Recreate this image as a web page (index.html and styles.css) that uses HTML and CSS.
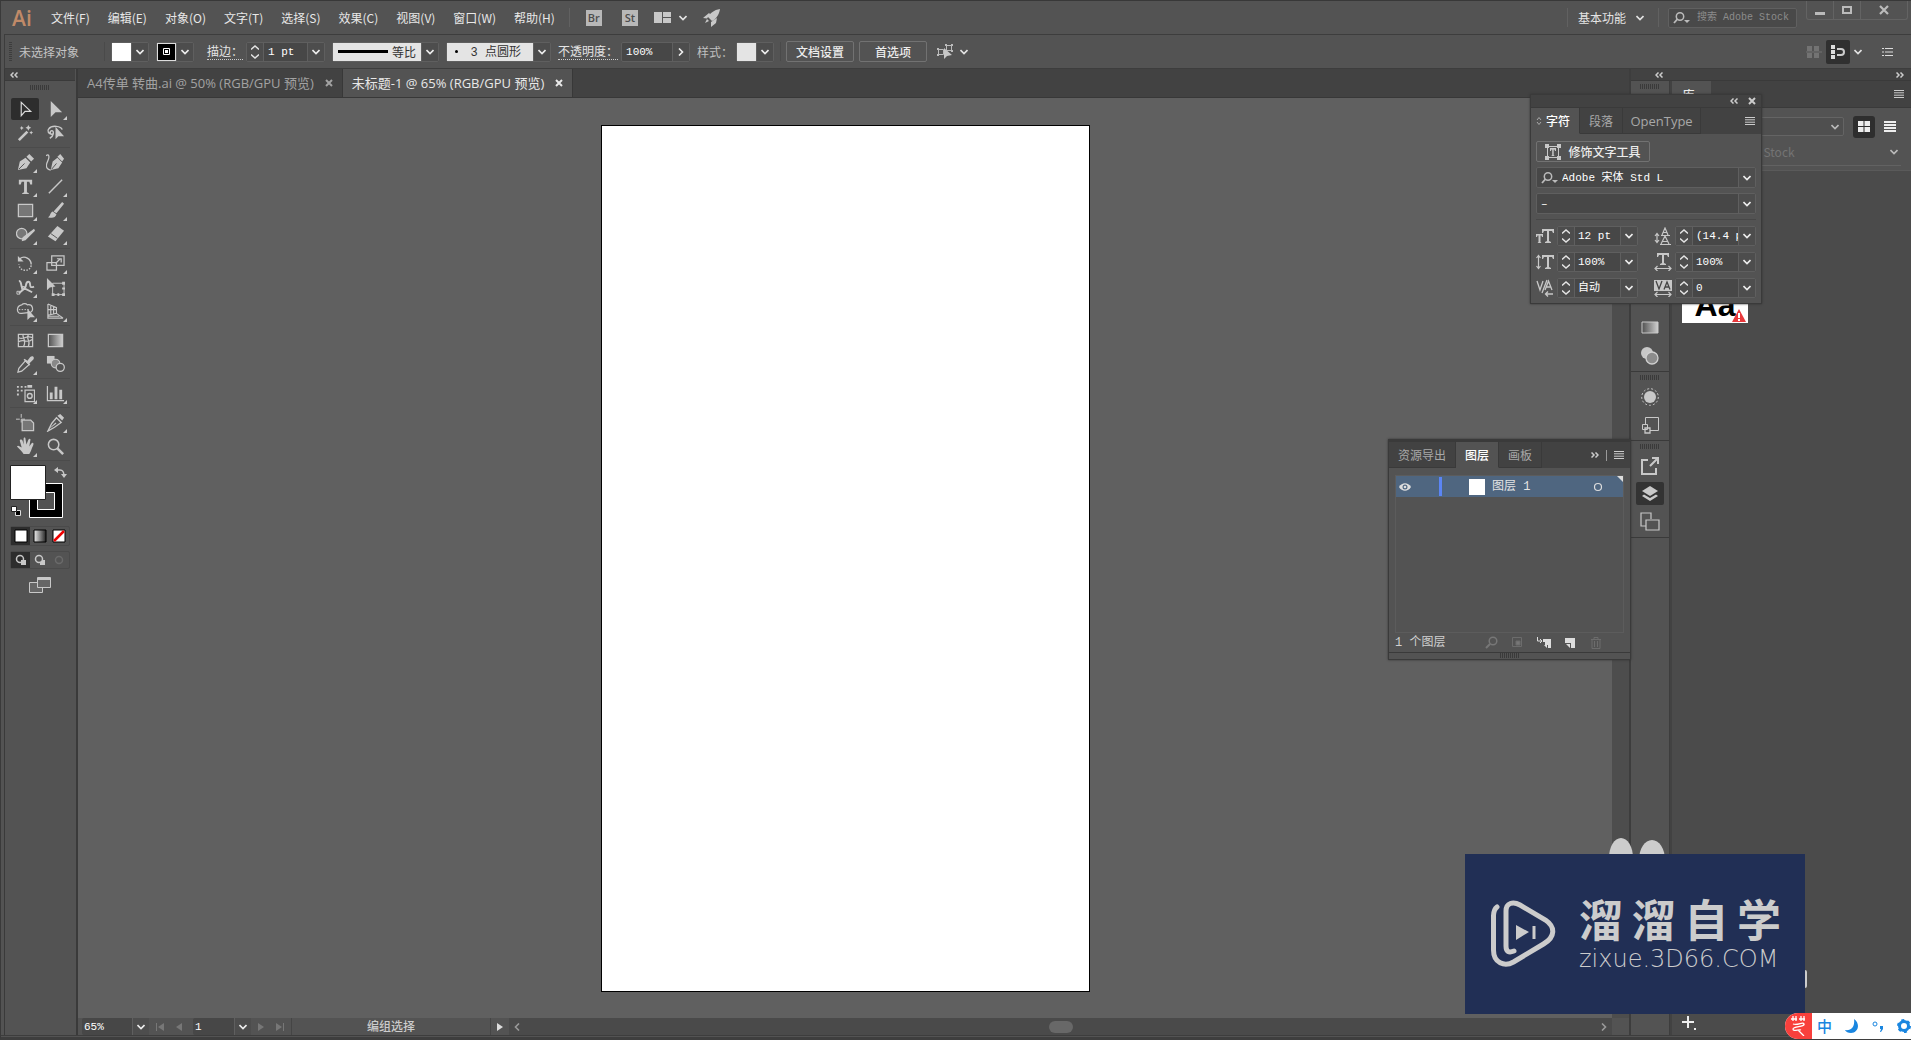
FILE: index.html
```html
<!DOCTYPE html>
<html lang="zh-CN">
<head>
<meta charset="utf-8">
<title>Ai</title>
<link rel="stylesheet" href="styles.css">
</head>
<body>
<svg class="defs" width="0" height="0" aria-hidden="true">
  <defs>
    <linearGradient id="grad"><stop offset="0" stop-color="#505050"/><stop offset="1" stop-color="#cfcfcf"/></linearGradient>
    <linearGradient id="grad2"><stop offset="0" stop-color="#eee"/><stop offset="1" stop-color="#222"/></linearGradient>
    <symbol id="chev" viewBox="0 0 8 6"><path d="M0.500 1l3.500 3.500L7.500 1" fill="none" stroke="currentColor" stroke-width="1.600"/></symbol>
    <symbol id="spin" viewBox="0 0 8 16"><path d="M0 5.500l4-3.500 4 3.500M0 10.500l4 3.500 4-3.500" fill="none" stroke="currentColor" stroke-width="1.500"/></symbol>
    <symbol id="dbl" viewBox="0 0 8 6"><path d="M3.500 .5L1 3l2.500 2.500M7.500 .5L5 3l2.500 2.500" fill="none" stroke="currentColor" stroke-width="1.500"/></symbol>
    <symbol id="cross" viewBox="0 0 8 8"><path d="M1 1l6 6M7 1L1 7" fill="none" stroke="currentColor" stroke-width="2"/></symbol>
    <symbol id="lines" viewBox="0 0 10 8"><path d="M0 .5h10M0 2.800h10M0 5.200h10M0 7.500h10" stroke="currentColor" stroke-width="1"/></symbol>
    <symbol id="find" viewBox="0 0 17 12"><circle cx="7" cy="4.500" r="3.700" fill="none" stroke="currentColor" stroke-width="1.500"/><path d="M4.500 7L1 11" stroke="currentColor" stroke-width="1.800"/><path d="M11 8h6l-3 3z" fill="currentColor"/></symbol>
  </defs>
</svg>

<div class="app">
  <header class="menubar">
    <span class="logo">Ai</span>
    <nav class="menus">
      <a href="#">文件(F)</a><a href="#">编辑(E)</a><a href="#">对象(O)</a><a href="#">文字(T)</a><a href="#">选择(S)</a><a href="#">效果(C)</a><a href="#">视图(V)</a><a href="#">窗口(W)</a><a href="#">帮助(H)</a>
    </nav>
    <i class="vsep"></i>
    <div class="apps">
      <button class="badge">Br</button>
      <button class="badge">St</button>
      <button class="plain" aria-label="Arrange"><svg width="17" height="11" viewBox="0 0 17 11"><path d="M0 0h8v11H0zM9 0h8v5H9zM9 6h8v5H9z" fill="#c8c8c8"/></svg><svg width="8" height="6"><use href="#chev"/></svg></button>
      <button class="plain" aria-label="GPU"><svg width="18" height="18" viewBox="0 0 18 18" fill="#c8c8c8"><path d="M17 0C11 1 7 4 5 8l4 4C13 10 16 6 17 0zM6 4L0 9l4 .5L7 5zM8 13v5l5-4 1-5zM4 10l-2 4 4-2z"/></svg></button>
    </div>
    <div class="menu-right">
      <i class="vsep"></i>
      <button class="plain workspace">基本功能<svg width="8" height="6"><use href="#chev"/></svg></button>
      <i class="vsep"></i>
      <label class="stock"><svg width="17" height="12"><use href="#find"/></svg><input type="text" placeholder="搜索 Adobe Stock" aria-label="搜索 Adobe Stock"></label>
      <div class="winbtns">
        <button aria-label="Minimize"><svg width="10" height="10"><path d="M0 7h10v3H0z" fill="#bbb"/></svg></button>
        <button aria-label="Maximize"><svg width="10" height="10"><path d="M1 2h8v6H1z" fill="none" stroke="#bbb" stroke-width="2"/></svg></button>
        <button class="close" aria-label="Close"><svg width="10" height="10"><path d="M1 1l8 8M9 1L1 9" stroke="#bbb" stroke-width="2.200"/></svg></button>
      </div>
    </div>
  </header>

  <section class="control">
    <i class="grip-v"></i>
    <span class="nosel">未选择对象</span>
    <i class="vsep"></i>
    <div class="combo"><span class="sw white"></span><button class="drop" aria-label="Fill"><svg width="8" height="6"><use href="#chev"/></svg></button></div>
    <div class="combo"><span class="sw black"><svg width="19" height="18"><path d="M6.500 5.500h6v6h-6z" fill="none" stroke="#fff"/><path d="M8 7h3v3H8z" fill="#fff"/></svg></span><button class="drop" aria-label="Stroke"><svg width="8" height="6"><use href="#chev"/></svg></button></div>
    <label class="dotted strokelab" for="sw">描边：</label>
    <div class="combo"><button class="spin" aria-label="Step"><svg width="8" height="16"><use href="#spin"/></svg></button><input id="sw" class="num" value="1 pt"><button class="drop" aria-label="Weight"><svg width="8" height="6"><use href="#chev"/></svg></button></div>
    <div class="combo"><span class="profile"><i></i>等比</span><button class="drop" aria-label="Profile"><svg width="8" height="6"><use href="#chev"/></svg></button></div>
    <div class="combo"><span class="profile brush"><b></b><span><span class="mono">3 </span>点圆形</span></span><button class="drop" aria-label="Brush"><svg width="8" height="6"><use href="#chev"/></svg></button></div>
    <label class="dotted" for="op">不透明度：</label>
    <div class="combo"><input id="op" class="num wide" value="100%"><button class="drop" aria-label="Opacity"><svg class="east" width="8" height="6"><use href="#chev"/></svg></button></div>
    <span class="stylelab">样式：</span>
    <div class="combo"><span class="sw light"></span><button class="drop" aria-label="Style"><svg width="8" height="6"><use href="#chev"/></svg></button></div>
    <i class="vsep tight"></i>
    <button class="outline">文档设置</button>
    <button class="outline">首选项</button>
    <button class="plain similar" aria-label="Select similar"><svg width="17" height="18" viewBox="0 0 17 18"><path d="M9.500 2.500h5v5h-5zM1.500 6.500h5v5h-5z" fill="none" stroke="#bbb"/><path d="M8 1h2v2H8zM14 1h2v2h-2zM14 7h2v2h-2zM0 5h2v2H0zM0 11h2v2H0z" fill="#bbb"/><path d="M7 5v11l3-3 5-1z" fill="#c8c8c8"/></svg><svg width="8" height="6"><use href="#chev"/></svg></button>
    <div class="ctl-right">
      <button class="plain" aria-label="Grid"><svg width="16" height="12" fill="#737373"><path d="M1 0h5v5H1zM8 0h5v5H8zM1 7h5v5H1zM8 7h5v5H8zM0 5.500h16v1H0z"/></svg></button>
      <button class="plain snap" aria-label="Snap"><svg width="14" height="14"><path d="M0 0h4v4H0zM0 5h4v4H0zM0 10h4v4H0z" fill="#ddd"/><path d="M6 4h4a2.500 2.500 0 0 1 0 6H6" fill="none" stroke="#ccc" stroke-width="2"/></svg></button>
      <button class="plain" aria-label="Snap options"><svg width="8" height="6"><use href="#chev"/></svg></button>
      <button class="plain last" aria-label="Menu"><svg width="11" height="8"><path d="M0 .5h2M3 .5h8M0 4h2M3 4h8M0 7.500h2M3 7.500h8" stroke="#ddd"/></svg></button>
    </div>
  </section>

  <main class="work">
    <aside class="tools">
      <div class="strip"><svg width="8" height="6"><use href="#dbl"/></svg></div>
      <i class="grip"></i>
      <div class="tgroup">
        <button class="on"><svg viewBox="0 0 20 20"><path d="M5.500 2.500v14l4-4.500h6z" fill="none" stroke="#ddd" stroke-width="1.200"/></svg></button>
        <button class="more"><svg viewBox="0 0 20 20"><path d="M5 1v17l5-5h7z"/></svg></button>
        <button><svg viewBox="0 0 20 20"><path d="M2 16l9-9 2 2-9 9zM13 1l1 2 2 1-2 1-1 2-1-2-2-1 2-1zM6 2l.7 1.500 1.500.7-1.500.7L6 6.500l-.7-1.600L4 4.200l1.300-.7zM16 7l.7 1.300L18 9l-1.300.7L16 11l-.7-1.300L14 9l1.300-.7z"/></svg></button>
        <button><svg viewBox="0 0 20 20"><path d="M8 11C2 11 1 7 3 5c3-4 13-3 14 1M7 11a2 2 0 1 1-1-4c3 0 2 6-2 8" fill="none" stroke="#c8c8c8" stroke-width="1.500"/><path d="M10 3v13l3-3h6z"/></svg></button>
      </div>
      <div class="tgroup">
        <button class="more"><svg viewBox="0 0 20 20"><path d="M2 18l2-9 6-4 5 5-4 6zM11 4l3-3 5 5-3 3z"/><path d="M3 17l6-6" stroke="#535353"/></svg></button>
        <button><svg viewBox="0 0 20 20"><path d="M5 18l2-9 5-4 5 5-4 6zM12 4l3-3 4 5-2 3z"/><path d="M6 17l5-6" stroke="#535353"/><path d="M0 3c3-3 4 1 2 5s-3 9 3 10" fill="none" stroke="#c8c8c8" stroke-width="1.300"/></svg></button>
        <button class="more"><svg viewBox="0 0 20 20"><path d="M3 3h14v5h-2l-1-3h-2.500v11l2 1v1h-7v-1l2-1V5H6L5 8H3z"/></svg></button>
        <button class="more"><svg viewBox="0 0 20 20"><path d="M3 17L17 3" stroke="#c8c8c8" stroke-width="1.500"/></svg></button>
        <button class="more"><svg viewBox="0 0 20 20"><path d="M2.500 3.500h15v13h-15z" fill="#777" stroke="#c8c8c8" stroke-width="1.300"/></svg></button>
        <button class="more"><svg viewBox="0 0 20 20"><path d="M17 1l2 2-8 10-3-2zM7 11l4 3c-1 4-5 4-9 3 3-1 2-5 5-6z"/></svg></button>
        <button class="more"><svg viewBox="0 0 20 20"><circle cx="6" cy="9" r="5.500" fill="#777" stroke="#c8c8c8" stroke-width="1.300"/><path d="M19 4l1 2-10 10-4 1 1-4z"/></svg></button>
        <button class="more"><svg viewBox="0 0 20 20"><path d="M12 1l7 5-9 11-8-5z"/><path d="M5 9l7 5" stroke="#535353"/></svg></button>
      </div>
      <div class="tgroup">
        <button class="more"><svg viewBox="0 0 20 20" fill="none" stroke="#c8c8c8" stroke-width="1.500"><path d="M4 5c5-4 12 0 12 6"/><path d="M16 12c-1 7-12 7-13-1" stroke-dasharray="1.500 1.500"/><path d="M2 2v6h6z" fill="#c8c8c8" stroke="none"/></svg></button>
        <button class="more"><svg viewBox="0 0 20 20" fill="none" stroke="#c8c8c8" stroke-width="1.300"><path d="M6 2h13v10H6zM1 9h10v8H1zM10 10l5-5M11.500 5H16v4"/></svg></button>
        <button class="more"><svg viewBox="0 0 20 20" fill="none" stroke="#c8c8c8" stroke-width="2"><path d="M3 3c4 0 1 8 5 8s1-7 5-7-1 8 6 5M3 16l6-5 8 4"/><path d="M1 14h3v3H1zM6 9h3v3H6z" stroke-width="1"/></svg></button>
        <button><svg viewBox="0 0 20 20"><path d="M7 5.500h12v12H7z" fill="none" stroke="#c8c8c8"/><path d="M1 0v13l3-3 6-1zM6 16h3v3H6zM12 16h2v3h-2zM17 16h3v3h-3zM17 4h3v3h-3zM17 10h3v2h-3z"/></svg></button>
        <button class="more"><svg viewBox="0 0 20 20"><path d="M6 3a4 4 0 0 1 6 0c6-1 7 6 3 8l-9 1C0 13 0 4 6 3z" fill="none" stroke="#c8c8c8" stroke-width="1.300"/><path d="M3 8h12" stroke="#c8c8c8" stroke-dasharray="1.500 1.500"/><path d="M12 7v12l3-3h5z"/></svg></button>
        <button class="more"><svg viewBox="0 0 20 20" fill="none" stroke="#c8c8c8" stroke-width="1.200"><path d="M2 2v15h16M2 2l9 4v6L2 14M2 8h9M5 3v10M8 5v8M11 12l7 5M2 15h12"/></svg></button>
      </div>
      <div class="tgroup">
        <button><svg viewBox="0 0 20 20" fill="none" stroke="#c8c8c8" stroke-width="1.300"><path d="M2.500 3.500h15v13h-15zM8 3c-3 3 4 6 0 13M2 12c5-5 9 2 15-3M13 4c-3 4 3 7 0 12M3 7c4 3 8-3 14 0"/></svg></button>
        <button><svg viewBox="0 0 20 20"><path d="M2.500 3.500h15v13h-15z" fill="url(#grad)" stroke="#c8c8c8" stroke-width="1.300"/></svg></button>
        <button class="more"><svg viewBox="0 0 20 20"><path d="M12 6l3-4c3-2 5 1 3 3l-4 4 1 1-1 1-6-6 1-1z"/><path d="M10 6l4 4-8 7-4 1 1-4z" fill="none" stroke="#c8c8c8" stroke-width="1.300"/></svg></button>
        <button><svg viewBox="0 0 20 20"><path d="M1 1h8v8H1z"/><circle cx="10" cy="9" r="4.500" fill="#888" stroke="#c8c8c8" stroke-width="1.200"/><circle cx="15" cy="13" r="4.300" fill="#535353" stroke="#c8c8c8" stroke-width="1.300"/></svg></button>
      </div>
      <div class="tgroup">
        <button class="more"><svg viewBox="0 0 20 20"><path d="M1 2h2v2H1zM5 2h2v2H5zM9 2h2v2H9zM1 6h2v2H1zM5 6h2v2H5zM1 10h2v2H1zM12 1h5v3h-5z"/><path d="M9.500 6.500h10v12h-10z" fill="none" stroke="#c8c8c8" stroke-width="1.300"/><circle cx="14.500" cy="12.500" r="2.500" fill="none" stroke="#c8c8c8" stroke-width="1.500"/></svg></button>
        <button class="more"><svg viewBox="0 0 20 20"><path d="M1.500 2v15.500H19" fill="none" stroke="#c8c8c8" stroke-width="1.300"/><path d="M4 9h3v7H4zM9 3h3v13H9zM14 6h3v10h-3z"/></svg></button>
      </div>
      <div class="tgroup">
        <button><svg viewBox="0 0 20 20"><path d="M6.500 7.500h9l3 3v8h-12z" fill="#777" stroke="#c8c8c8" stroke-width="1.300"/><path d="M0 6.500h10M5.500 1v9" stroke="#c8c8c8" stroke-dasharray="4 1.500"/></svg></button>
        <button class="more"><svg viewBox="0 0 20 20"><path d="M11 5l5 5-7 5-7 4 4-8z" fill="none" stroke="#c8c8c8" stroke-width="1.400"/><path d="M12 3l3-2 4 4-2 3zM2 18l8-8 1 1z"/></svg></button>
        <button class="more"><svg viewBox="0 0 20 20"><path d="M8 18c-2-3-4-5-7-8 1-2 3 0 5 1L4 4c0-2 2-2 3 0l1 4V2c0-2 2-2 2 0l1 6 2-5c1-2 3-1 2 1l-1 6 2-3c2-2 3 0 2 2-2 4-2 6-4 9z"/></svg></button>
        <button><svg viewBox="0 0 20 20" fill="none" stroke="#c8c8c8"><circle cx="8" cy="8" r="5.500" stroke-width="1.600"/><path d="M12 12l6 6" stroke-width="2.600"/></svg></button>
      </div>
      <div class="fillstroke">
        <svg width="60" height="58" viewBox="0 0 60 58"><path d="M19.500 18.500h33v34h-33z" fill="#000" stroke="#fff"/><path d="M27.500 27.500h17v17h-17z" fill="#535353" stroke="#fff"/><path d="M.5.5h35v34H.5z" fill="#fff" stroke="#222"/><path d="M47 5h3c3 0 4 2 4 6" fill="none" stroke="#c8c8c8" stroke-width="1.300"/><path d="M44 5l4-3v6zM51 9h6l-3 4z" fill="#c8c8c8"/><path d="M5.500 45.500h5v5h-5z" fill="#000" stroke="#ddd"/><path d="M1.500 41.500h5v5h-5z" fill="#fff" stroke="#222"/></svg>
      </div>
      <div class="modes">
        <button class="on"><svg width="14" height="14"><path d="M1 1h12v12H1z" fill="#fff" stroke="#000"/></svg></button>
        <button><svg width="14" height="14"><path d="M1 1h12v12H1z" fill="url(#grad2)" stroke="#000"/></svg></button>
        <button><svg width="14" height="14"><path d="M1 1h12v12H1z" fill="#fff" stroke="#000"/><path d="M2 12L12 2" stroke="#e00" stroke-width="2.500"/></svg></button>
      </div>
      <div class="modes second">
        <button class="on"><svg width="12" height="12"><circle cx="5" cy="5" r="3.500" fill="none" stroke="#c8c8c8" stroke-width="1.500"/><path d="M6 6h5v5H6z" fill="#c8c8c8"/></svg></button>
        <button><svg width="12" height="12"><path d="M6 6h5v5H6z" fill="#c8c8c8"/><circle cx="5" cy="5" r="3.500" fill="#535353" stroke="#c8c8c8" stroke-width="1.500"/></svg></button>
        <button><svg width="12" height="12"><circle cx="6" cy="6" r="3.500" fill="none" stroke="#6a6a6a" stroke-width="1.500"/></svg></button>
      </div>
      <button class="screenmode" aria-label="Screen mode"><svg width="22" height="16"><path d="M.5 5.500h13v10H.5z" fill="#666" stroke="#c8c8c8"/><path d="M8.500 .5h13v10h-13z" fill="#666" stroke="#c8c8c8"/><path d="M8 1h14v2H8z" fill="#c8c8c8"/></svg></button>
    </aside>

    <section class="doc">
      <div class="doctabs">
        <div class="doctab">A4传单 转曲.ai @ 50% (RGB/GPU 预览)<svg width="8" height="8"><use href="#cross"/></svg></div>
        <div class="doctab active">未标题-1 @ 65% (RGB/GPU 预览)<svg width="8" height="8"><use href="#cross"/></svg></div>
      </div>
      <div class="viewport">
        <div class="canvas"><div class="artboard"></div></div>
        <div class="vscroll"></div>
      </div>
      <footer class="status">
        <div class="combo flat"><input class="num wide" value="65%" aria-label="Zoom"><button class="drop" aria-label="Zoom list"><svg width="8" height="6"><use href="#chev"/></svg></button></div>
        <div class="nav"><svg width="8" height="8"><path d="M0 0h1v8H0zM8 0v8L2 4z"/></svg><svg width="6" height="8"><path d="M6 0v8L0 4z"/></svg></div>
        <div class="combo flat"><input class="num" value="1" aria-label="Artboard"><button class="drop" aria-label="Artboard list"><svg width="8" height="6"><use href="#chev"/></svg></button></div>
        <div class="nav"><svg width="6" height="8"><path d="M0 0v8l6-4z"/></svg><svg width="8" height="8"><path d="M7 0h1v8H7zM0 0v8l6-4z"/></svg></div>
        <div class="statustext">编组选择</div>
        <button class="play" aria-label="Status menu"><svg width="6" height="8"><path d="M0 0v8l6-4z" fill="#ddd"/></svg></button>
        <div class="hscroll"><svg class="west" width="8" height="6"><use href="#chev"/></svg><i></i><svg class="east" width="8" height="6"><use href="#chev"/></svg></div>
        <div class="corner"></div>
      </footer>
    </section>

    <aside class="right">
      <div class="strip both"><svg width="8" height="6"><use href="#dbl"/></svg><svg class="flip" width="8" height="6"><use href="#dbl"/></svg></div>
      <div class="columns">
        <div class="dock">
          <div class="dgroup first"><i class="grip"></i><i class="fill"></i>
            <button><svg width="18" height="14"><path d="M1 1h16v11H1z" fill="url(#grad)" stroke="#c8c8c8"/></svg></button>
            <button><svg width="20" height="20"><circle cx="7" cy="7" r="6" fill="#c8c8c8"/><circle cx="12" cy="12" r="6" fill="#8c8c8c" stroke="#d0d0d0" stroke-width="1.300"/></svg></button>
          </div>
          <div class="dgroup"><i class="grip"></i>
            <button><svg width="20" height="20"><circle cx="10" cy="10" r="6" fill="#c8c8c8"/><circle cx="10" cy="10" r="8.300" fill="none" stroke="#c8c8c8" stroke-dasharray="2 2"/></svg></button>
            <button><svg width="18" height="18" fill="none" stroke="#c8c8c8"><path d="M4.500 8V1.500h13v13H9M1.500 8.500h5v5h-5z"/><path d="M4 12h5v5H4z" stroke-width="1.300"/></svg></button>
          </div>
          <div class="dgroup"><i class="grip"></i>
            <button><svg width="20" height="20" fill="none" stroke="#c8c8c8" stroke-width="2"><path d="M8 4H2v14h14v-6M10 10l7-7M12 2h6v6"/></svg></button>
            <button class="on"><svg width="18" height="18" fill="#c8c8c8"><path d="M9 1l8 5-8 5-8-5z"/><path d="M1 11l2-1.500 6 3.500 6-3.500 2 1.500-8 5z"/></svg></button>
            <button><svg width="20" height="20" fill="none" stroke="#c8c8c8" stroke-width="1.200"><path d="M6 14H1V1h10v6M6 8h13v10H6z"/></svg></button>
          </div>
        </div>
        <div class="library">
          <div class="libtabs"><span>库</span><svg width="10" height="8"><use href="#lines"/></svg></div>
          <div class="libhead">
            <div class="librow">
              <div class="field"><select aria-label="Library"><option></option></select><svg width="8" height="6"><use href="#chev"/></svg></div>
              <button class="plain on" aria-label="Grid view"><svg width="12" height="11" fill="#eee"><path d="M0 0h5.500v5H0zM6.500 0H12v5H6.500zM0 6h5.500v5H0zM6.500 6H12v5H6.500z"/></svg></button>
              <button class="plain" aria-label="List view"><svg width="12" height="11" fill="#eee"><path d="M0 0h12v2H0zM0 3h12v2H0zM0 6h12v2H0zM0 9h12v2H0z"/></svg></button>
            </div>
            <div class="libsearch"><input type="text" placeholder="搜索 Adobe Stock" aria-label="Stock"><svg width="8" height="6"><use href="#chev"/></svg></div>
          </div>
          <div class="libbody">
            <div class="thumb">Aa<svg class="warn" width="14" height="13"><path d="M7 0l7 13H0z" fill="#e8393c"/><path d="M6 4h2v5H6zM6 10h2v2H6z" fill="#fff"/></svg></div>
            <button class="plus" aria-label="Add"><svg width="14" height="14"><path d="M5 0h2v5h5v2H7v5H5V7H0V5h5zM12 12h2v2h-2z" fill="#eee"/></svg></button>
          </div>
        </div>
      </div>
    </aside>
  </main>
</div>

<section class="float character">
  <div class="floatbar"><svg width="8" height="6"><use href="#dbl"/></svg><svg width="8" height="8"><use href="#cross"/></svg></div>
  <div class="ptabs"><button class="active"><svg width="6" height="10"><path d="M1 4l2-2.500L5 4M1 6l2 2.500L5 6" fill="none" stroke="#aaa"/></svg>字符</button><button>段落</button><button class="latin">OpenType</button><svg class="pmenu" width="10" height="8"><use href="#lines"/></svg></div>
  <div class="charbody">
    <button class="outline touch"><svg width="16" height="16"><path d="M2.500 2.500h11v11h-11z" fill="none" stroke="#c8c8c8"/><path d="M0 0h4v4H0zM12 0h4v4h-4zM0 12h4v4H0zM12 12h4v4h-4zM5 4h6v3h-1l-.5-1.500h-.8V11l1 1H6.200l1-1V5.500h-.8L6 7H5z" fill="#c8c8c8"/></svg>修饰文字工具</button>
    <div class="combo full"><svg class="lead" width="17" height="12"><use href="#find"/></svg><input class="num" value="Adobe 宋体 Std L" aria-label="Font"><button class="drop" aria-label="Font list"><svg width="8" height="6"><use href="#chev"/></svg></button></div>
    <div class="combo full"><input class="num" value="–" aria-label="Font style"><button class="drop" aria-label="Style list"><svg width="8" height="6"><use href="#chev"/></svg></button></div>
    <hr>
    <div class="chargrid">
      <div class="crow"><svg width="18" height="18" fill="#c8c8c8"><path d="M6 2h12v4h-1l-1-2h-3v10l2 1v1H9v-1l2-1V4H8L7 6H6zM0 7h7v3H6L5.500 8.500h-1V15l1 1h-4l1-1V8.500h-1L1 10H0z"/></svg><div class="combo"><button class="spin" aria-label="Step"><svg width="8" height="16"><use href="#spin"/></svg></button><input class="num" value="12 pt" aria-label="Size"><button class="drop" aria-label="Sizes"><svg width="8" height="6"><use href="#chev"/></svg></button></div></div>
      <div class="crow"><svg width="18" height="18" fill="none" stroke="#c8c8c8" stroke-width="1.200"><path d="M7 17l4-8 4 8M8.500 14.500h5M8 8l3-7 3 7M9.500 5.500h3M6 17.500h11M7 8.500h9M3 7v8M1 9l2-2.500L5 9M1 13l2 2.500L5 13"/></svg><div class="combo"><button class="spin" aria-label="Step"><svg width="8" height="16"><use href="#spin"/></svg></button><input class="num" value="(14.4 pt)" aria-label="Leading"><button class="drop" aria-label="Leadings"><svg width="8" height="6"><use href="#chev"/></svg></button></div></div>
      <div class="crow"><svg width="18" height="18" fill="#c8c8c8"><path d="M6 2h12v4h-1l-1-2h-3v10l2 1v1H9v-1l2-1V4H8L7 6H6z"/><path d="M2.500 3v12M.5 5l2-2.500 2 2.500M.5 13l2 2.500 2-2.500" fill="none" stroke="#c8c8c8" stroke-width="1.200"/></svg><div class="combo"><button class="spin" aria-label="Step"><svg width="8" height="16"><use href="#spin"/></svg></button><input class="num" value="100%" aria-label="Vertical scale"><button class="drop" aria-label="Vertical scales"><svg width="8" height="6"><use href="#chev"/></svg></button></div></div>
      <div class="crow"><svg width="18" height="18" fill="#c8c8c8"><path d="M3 0h12v4h-1l-1-2h-3v8l2 1v1H6v-1l2-1V2H5L4 4H3z"/><path d="M1 15.500h16M3.500 13l-2.500 2.500L3.500 18M14.500 13l2.500 2.500-2.500 2.500" fill="none" stroke="#c8c8c8" stroke-width="1.200"/></svg><div class="combo"><button class="spin" aria-label="Step"><svg width="8" height="16"><use href="#spin"/></svg></button><input class="num" value="100%" aria-label="Horizontal scale"><button class="drop" aria-label="Horizontal scales"><svg width="8" height="6"><use href="#chev"/></svg></button></div></div>
      <div class="crow"><svg width="18" height="18" fill="none" stroke="#c8c8c8" stroke-width="1.300"><path d="M1 2l3 9 3-9M9 11l3.500-9L16 11M10 8h5M11 1L6 14M10 15h7M12 12.500L9.500 15l2.500 2.500"/></svg><div class="combo"><button class="spin" aria-label="Step"><svg width="8" height="16"><use href="#spin"/></svg></button><input class="num" value="自动" aria-label="Kerning"><button class="drop" aria-label="Kernings"><svg width="8" height="6"><use href="#chev"/></svg></button></div></div>
      <div class="crow"><svg width="18" height="18"><path d="M0 1h18v11H0z" fill="#c8c8c8"/><path d="M2 2l3 8 3-8M10 10.500L13 3l3 7.500M11 8h4" fill="none" stroke="#444" stroke-width="1.300"/><path d="M1 15.500h16M3.500 13l-2.500 2.500L3.500 18M14.500 13l2.500 2.500-2.500 2.500" fill="none" stroke="#c8c8c8" stroke-width="1.200"/></svg><div class="combo"><button class="spin" aria-label="Step"><svg width="8" height="16"><use href="#spin"/></svg></button><input class="num" value="0" aria-label="Tracking"><button class="drop" aria-label="Trackings"><svg width="8" height="6"><use href="#chev"/></svg></button></div></div>
    </div>
  </div>
</section>

<section class="float layers">
  <div class="ptabs"><button>资源导出</button><button class="active">图层</button><button>画板</button><span class="pmenu"><svg class="flip" width="8" height="6"><use href="#dbl"/></svg><i></i><svg width="10" height="8"><use href="#lines"/></svg></span></div>
  <div class="layerlist">
    <div class="layer"><svg width="12" height="8"><path d="M0 4c3-5 9-5 12 0-3 5-9 5-12 0z" fill="#ddd"/><circle cx="6" cy="4" r="2.500" fill="#4f6680"/><circle cx="6" cy="4" r="1.300" fill="#ddd"/></svg><i class="tint"></i><i class="pic"></i><span>图层 1</span><svg class="target" width="10" height="10"><circle cx="5" cy="5" r="3.500" fill="none" stroke="#ddd" stroke-width="1.200"/></svg><svg class="fold" width="6" height="6"><path d="M0 0h6v6z" fill="#ddd"/></svg></div>
  </div>
  <div class="layerfoot"><span>1 个图层</span>
    <svg width="14" height="14" fill="none" stroke="#777"><circle cx="8" cy="5" r="3.800" stroke-width="1.500"/><path d="M5 8l-4 4" stroke-width="2"/></svg>
    <svg width="14" height="14" fill="none" stroke="#6c6c6c"><path d="M1.500 1.500h9v9h-9z"/><path d="M5 5h4v4H5z" fill="#777"/></svg>
    <svg width="14" height="14" fill="#ddd"><path d="M6 3h8v9h-3V9H8V6H6zM7 9h3v3z"/><path d="M.5 1v4h4M3 3l2 2-2 2" fill="none" stroke="#ddd"/></svg>
    <svg width="14" height="14" fill="#ddd"><path d="M2 2h10v10H8V7H2zM3 8h4v4z"/></svg>
    <svg width="14" height="14" fill="none" stroke="#6c6c6c"><path d="M2 3.500h10M5 3V1.500h4V3M3 4v8.500h8V4M5.500 5v6M8.500 5v6"/></svg>
  </div>
  <div class="resize"><i class="grip"></i></div>
</section>

<i class="ear left"></i><i class="ear"></i><i class="sliver"></i>
<section class="mark">
  <svg width="66" height="68" viewBox="0 0 66 68" fill="none" stroke="#ccc" stroke-width="5"><path d="M6 7C2 10 2.500 14 2.500 18v32c0 13 11 17 20 12l30-18c12-7 12-17 2-24L29 5c-7-4-14-2-14 6v35c0 6 3 7 8 5" stroke-linecap="round"/><path d="M25 25v15l13-8z" fill="#ccc" stroke="none"/><path d="M43 26v13" stroke-width="3"/></svg>
  <div class="marktext"><div class="cn"><span>溜</span><span>溜</span><span>自</span><span>学</span></div><div class="en">zixue.3D66.COM</div></div>
</section>
<div class="ime">
  <span class="red"><svg width="16" height="20" fill="none" stroke="#fff" stroke-width="1.300"><path d="M1 3h6M3 0v5M6 0v5M9 3h6M11 0v5M14 0v5M3 8c5 2 10-3 11 0s-11 2-11 5 6 0 8 1M8 14l6 6"/></svg></span>
  <span class="zh">中</span>
  <svg width="14" height="14"><path d="M9 0c7 5 4 14-3 14-3 0-5-1-6-3 7 1 10-4 9-11z" fill="#1a86e0"/></svg>
  <svg width="12" height="12"><circle cx="3" cy="4" r="2" fill="none" stroke="#1a86e0"/><path d="M8 6h3v3l-2 3H8l1-3H8z" fill="#1a86e0"/></svg>
  <svg width="14" height="14" fill="none" stroke="#1a86e0"><circle cx="7" cy="7" r="4.500" stroke-width="3"/><circle cx="7" cy="7" r="6" stroke-width="2" stroke-dasharray="3 3.200"/></svg>
</div>
</body>
</html>
```

FILE: styles.css
```css
* { box-sizing: border-box; }
html, body { height: 100%; }
body {
  margin: 0;
  overflow: hidden;
  position: relative;
  background: #535353;
  color: #e4e4e4;
  font: 12px/16px "Noto Sans CJK SC", sans-serif;
}
button, input, select { font: inherit; color: inherit; margin: 0; padding: 0; border: 0; background: none; border-radius: 0; }
button { display: flex; align-items: center; justify-content: center; }
svg { display: block; flex: none; }
i { font-style: normal; flex: none; }
.defs { position: absolute; }

.app {
  height: 100vh;
  display: flex;
  flex-direction: column;
  border-top: 1px solid #383838;
  border-left: 1px solid #3a3a3a;
  border-bottom: 3px solid #3e3e3e;
}
.vsep { width: 1px; height: 19px; background: #616161; }
.plain { gap: 6px; }
.east { transform: rotate(-90deg); }
.west { transform: rotate(90deg); }
.flip { transform: rotate(180deg); }
.mono { font: 12px/16px "Liberation Mono", monospace; }

/* menu bar */
.menubar { display: flex; align-items: center; height: 33px; padding-left: 11px; flex: none; }
.logo { font: 600 21px/30px "Open Sans", sans-serif; color: #c08a68; width: 39px; }
.menus { display: flex; gap: 18px; margin-right: 14px; }
.menus a { color: #e8e8e8; text-decoration: none; }
.apps { display: flex; align-items: center; gap: 16px; padding-left: 16px; }
.apps .plain { gap: 8px; }
.badge { width: 16px; height: 16px; background: #b8b8b8; color: #4c4c4c; font: 600 11px/16px "Open Sans", sans-serif; }
.badge + .badge { margin-left: 4px; }
.menu-right { margin-left: auto; display: flex; align-items: center; height: 33px; }
.workspace { margin: 0 14px 0 10px; gap: 10px; }
.stock {
  display: flex; align-items: center; gap: 7px;
  width: 129px; height: 20px; margin: 0 9px; padding-left: 4px;
  background: #494949; border: 1px solid #606060; border-radius: 2px; color: #bbb;
}
.stock input { width: 98px; font: 10px/16px "Liberation Mono", "Noto Sans CJK SC", monospace; }
.stock input::placeholder { color: #8c8c8c; opacity: 1; }
.winbtns { display: flex; align-self: flex-start; height: 19px; margin-right: 3px; border: 1px solid #636363; border-top: 0; border-radius: 0 0 3px 3px; }
.winbtns button { width: 27px; border-right: 1px solid #636363; }
.winbtns .close { width: 46px; border: 0; }

/* control bar */
.control { display: flex; align-items: center; gap: 7px; height: 35px; flex: none; margin-left: 3px; padding-left: 4px; border: solid #3d3d3d; border-width: 1px 0 1px 1px; }
.grip-v { width: 3px; height: 19px; background: repeating-linear-gradient(#3d3d3d 0 1px, transparent 1px 2px); }
.nosel { width: 78px; color: #c4c4c4; }
.control .vsep { margin-right: -1px; background: #4a4a4a; }
.control .tight { margin: 0 -2px 0 -1px; }
.combo { display: flex; height: 20px; border: 1px solid #5f5f5f; border-radius: 2px; background: #474747; }
.drop { width: 17px; border-left: 1px solid #5f5f5f; background: #4d4d4d; flex: none; color: #eee; }
.spin { width: 17px; border-right: 1px solid #5f5f5f; background: #4d4d4d; flex: none; }
.num { width: 43px; min-width: 0; padding-left: 4px; font: 11px/16px "Liberation Mono", "Noto Sans CJK SC", monospace; color: #fff; }
.num.wide { width: 50px; }
.sw { width: 19px; }
.white { background: #fff; }
.black { background: #000; outline: 1px solid #ddd; outline-offset: -1px; }
.light { background: #e4e4e4; }
.dotted { border-bottom: 1px dotted #ccc; height: 17px; white-space: nowrap; }
.control .dotted, .stylelab { width: max-content; margin-right: -4px; }
.control .strokelab { margin-left: 6px; }
.stylelab { color: #c0c0c0; }
.profile { display: flex; align-items: center; justify-content: space-between; width: 88px; padding: 0 5px; background: #e4e4e4; color: #333; }
.profile i { width: 50px; height: 3px; background: #000; }
.brush { width: 86px; padding: 0 12px 0 8px; }
.brush b { width: 3px; height: 3px; border-radius: 2px; background: #000; }
.outline { height: 21px; width: 68px; border: 1px solid #727272; border-radius: 2px; color: #ececec; font-weight: 500; }
.outline + .outline { margin-left: -2px; }
.similar { margin-left: 3px; }
.ctl-right { margin-left: auto; display: flex; align-items: center; gap: 4px; margin-right: 18px; }
.snap { width: 24px; height: 24px; background: #303030; border-radius: 2px; }
.ctl-right .last { margin-left: 16px; }

/* work area */
.work { flex: 1; min-height: 0; display: flex; border-bottom: 1px solid #3d3d3d; margin-bottom: 1px; }
.strip { height: 12px; background: #424242; border-bottom: 1px solid #3a3a3a; display: flex; align-items: center; padding-left: 5px; color: #ccc; flex: none; }
.grip { display: block; width: 20px; height: 5px; background: repeating-linear-gradient(90deg, #3a3a3a 0 1px, transparent 1px 2px); }
.tools { width: 74px; flex: none; margin-left: 3px; padding-right: 1px; border: solid #3a3a3a; border-width: 0 2px 0 1px; display: flex; flex-direction: column; align-items: center; }
.tools .strip { align-self: stretch; }
.tools > .grip { margin: 4px 0 7px; }
.tgroup { display: grid; grid-template-columns: 30px 30px; grid-auto-rows: 24px; padding-bottom: 2px; margin-bottom: 2px; border-bottom: 1px solid #4b4b4b; justify-items: center; align-items: center; }
.tgroup button { width: 28px; height: 22px; border-radius: 2px; position: relative; }
.tgroup svg { width: 19px; height: 19px; fill: #c8c8c8; }
.tgroup svg[fill="none"] { fill: none; }
.tgroup .on, .modes .on { background: #2d2d2d; }
.more::after { content: ""; position: absolute; right: 2px; bottom: 0; border: 2px solid transparent; border-right-color: #ccc; border-bottom-color: #ccc; }
.fillstroke { width: 60px; height: 58px; margin-top: 2px; }
.modes { display: flex; width: 60px; height: 20px; margin-top: 3px; border: 1px solid #4a4a4a; border-radius: 2px; }
.modes button { flex: 1; }
.modes.second { margin: 5px 0 8px; height: 18px; }

.doc { flex: 1; min-width: 0; display: flex; flex-direction: column; }
.doctabs { display: flex; height: 29px; flex: none; background: #424242; border-bottom: 1px solid #383838; }
.doctab { display: flex; align-items: center; gap: 11px; padding: 0 9px; border-right: 1px solid #383838; color: #a2a2a2; font: 13px/20px "Open Sans", "Noto Sans CJK SC", sans-serif; white-space: nowrap; }
.doctab.active { background: #535353; color: #e8e8e8; }
.viewport { flex: 1; min-height: 0; display: flex; }
.canvas { flex: 1; background: #606060; display: flex; align-items: center; justify-content: center; }
.artboard { height: calc(100% - 53px); aspect-ratio: 489 / 867; background: #fff; border: 1px solid #000; }
.vscroll { width: 17px; background: #4d4d4d; }
.status { height: 17px; flex: none; display: flex; align-items: stretch; }
.flat { border: 0; height: 17px; margin-left: 4px; }
.flat .num { width: 41px; padding-left: 2px; }
.flat .wide { width: 50px; }
.nav { display: flex; align-items: center; justify-content: center; gap: 12px; width: 40px; fill: #777; }
.statustext { flex: 0 1 200px; text-align: center; border: solid #454545; border-width: 0 1px; color: #ccc; font-weight: 500; }
.play { width: 18px; }
.hscroll { flex: 1; display: flex; align-items: center; justify-content: space-between; background: #4a4a4a; padding: 0 4px; color: #999; }
.hscroll i { width: 24px; height: 12px; border-radius: 6px; background: #686868; }
.corner { width: 17px; background: #535353; }

/* right side */
.right { width: 282px; flex: none; display: flex; flex-direction: column; border-left: 2px solid #3d3d3d; }
.both { justify-content: space-between; padding: 0 7px 0 24px; }
.columns { flex: 1; display: flex; }
.dock { width: 39px; border-right: 1px solid #3d3d3d; }
.dgroup { display: flex; flex-direction: column; align-items: center; border-bottom: 1px solid #3a3a3a; padding: 3px 0 4px; gap: 5px; }
.dgroup button { width: 28px; height: 23px; border-radius: 2px; }
.dgroup .on { background: #333; }
.first { height: 291px; }
.fill { flex: 1; }
.library { flex: 1; border-left: 2px solid #424242; display: flex; flex-direction: column; }
.libtabs { height: 27px; background: #424242; display: flex; justify-content: space-between; align-items: center; padding-right: 7px; border-bottom: 1px solid #3a3a3a; color: #ccc; }
.libtabs span { width: 39px; height: 26px; line-height: 28px; padding-right: 6px; text-align: center; background: #535353; color: #eee; font-weight: 500; }
.libhead { height: 63px; border-bottom: 1px solid #5a5a5a; }
.librow { display: flex; align-items: center; padding: 6px 15px 0 6px; height: 31px; }
.field { flex: 1; display: flex; align-items: center; height: 19px; border: 1px solid #646464; border-radius: 2px; background: #4f4f4f; padding-right: 4px; color: #bbb; }
.field select { flex: 1; appearance: none; }
.librow .plain { width: 22px; height: 22px; margin-left: 9px; border-radius: 3px; }
.librow .plain + .plain { width: 12px; margin-left: 9px; }
.librow .on { background: #2e2e2e; }
.libsearch { display: flex; align-items: center; height: 27px; margin: 0 10px 0 26px; padding-right: 3px; border-bottom: 1px solid #626262; color: #bbb; }
.libsearch input { flex: 1; min-width: 0; }
.libsearch input::placeholder { color: #747474; opacity: 1; }
.libbody { flex: 1; background: #4b4b4b; display: flex; flex-direction: column; justify-content: space-between; align-items: flex-start; padding: 86px 10px 5px; }
.thumb { position: relative; width: 66px; height: 66px; background: #fff; color: #000; font: 700 32px/36px "Liberation Sans", sans-serif; display: flex; align-items: flex-end; justify-content: center; }
.warn { position: absolute; right: 2px; bottom: 1px; }

/* floating panels */
.float { position: absolute; background: #535353; border: 1px solid #3a3a3a; box-shadow: 0 0 2px #333; }
.character { top: 94px; right: 149px; width: 232px; }
.floatbar { height: 12px; background: #424242; display: flex; align-items: center; justify-content: flex-end; gap: 10px; padding-right: 5px; color: #ccc; }
.ptabs { display: flex; height: 27px; background: #424242; border-top: 1px solid #3a3a3a; align-items: stretch; }
.ptabs button { color: #a8a8a8; padding: 0 9px; border-right: 1px solid #3a3a3a; border-bottom: 1px solid #3a3a3a; gap: 4px; }
.ptabs .active { background: #535353; border-bottom-color: #535353; color: #fff; font-weight: 500; }
.ptabs .latin { font: 13px/20px "Open Sans", sans-serif; width: 78px; }
.character .ptabs .active { padding-left: 5px; }
.pmenu { margin: auto 6px auto auto; display: flex; align-items: center; gap: 7px; color: #ccc; }
.pmenu i { width: 1px; height: 11px; background: #999; }
.charbody { display: flex; flex-direction: column; gap: 5px; padding: 7px 5px 5px; }
.touch { width: 114px; height: 21px; gap: 7px; }
.full { height: 21px; }
.full .num { flex: 1; }
.full .lead { align-self: center; margin: 0 0 0 4px; color: #bbb; }
.charbody hr { width: 100%; height: 1px; border: 0; background: #474747; margin: 0 0 1px; }
.chargrid { display: grid; grid-template-columns: 1fr 1fr; gap: 6px 16px; }
.crow { display: flex; align-items: center; gap: 3px; }
.crow .combo { flex: 1; min-width: 0; }
.crow .num { flex: 1; width: 20px; padding-left: 3px; }

.layers { top: 439px; right: 280px; width: 243px; border-top-width: 2px; }
.layerlist { height: 158px; margin: 7px 6px 0; border: 1px solid #5c5c5c; }
.layer { display: flex; align-items: center; height: 21px; background: #4f6680; padding-left: 3px; position: relative; }
.tint { width: 3px; height: 19px; margin: 0 27px 0 28px; background: #5b85f5; }
.pic { width: 16px; height: 16px; background: #fff; margin-right: 7px; }
.layer span, .layerfoot span { font: 12px/16px "Liberation Mono", "Noto Sans CJK SC", monospace; }
.target { margin-left: auto; margin-right: 20px; }
.fold { position: absolute; right: 0; top: 0; }
.layerfoot { display: flex; align-items: center; gap: 12px; height: 20px; padding: 0 27px 0 6px; border-bottom: 1px solid #3a3a3a; color: #d0d0d0; }
.layerfoot span { margin-right: auto; }
.resize { height: 6px; display: flex; justify-content: center; }

/* overlays */
.ear { position: absolute; top: 840px; right: 246px; width: 26px; height: 40px; border-radius: 50%; background: #ccc; }
.ear.left { top: 838px; right: 278px; width: 24px; }
.sliver { position: absolute; top: 970px; right: 104px; width: 4px; height: 18px; border-radius: 2px; background: #ccc; }
.mark { position: absolute; right: 106px; bottom: 26px; width: 340px; height: 160px; background: #212f55; color: #ccc; display: flex; align-items: center; gap: 22px; padding-left: 26px; }
.marktext { display: flex; flex-direction: column; width: 202px; }
.cn { display: flex; justify-content: space-between; font-weight: 700; font-size: 44px; line-height: 44px; padding-bottom: 6px; }
.en { font: 200 24px/26px "DejaVu Sans", sans-serif; }
.ime { position: absolute; right: 0; bottom: 1px; width: 126px; height: 26px; display: flex; align-items: center; gap: 13px; background: #fff; border-radius: 13px 0 0 13px; overflow: hidden; }
.red { width: 28px; height: 26px; background: #f8403c; display: flex; align-items: center; justify-content: center; }
.zh { color: #1a86e0; font-size: 15px; font-weight: 500; margin-left: -8px; }
```
